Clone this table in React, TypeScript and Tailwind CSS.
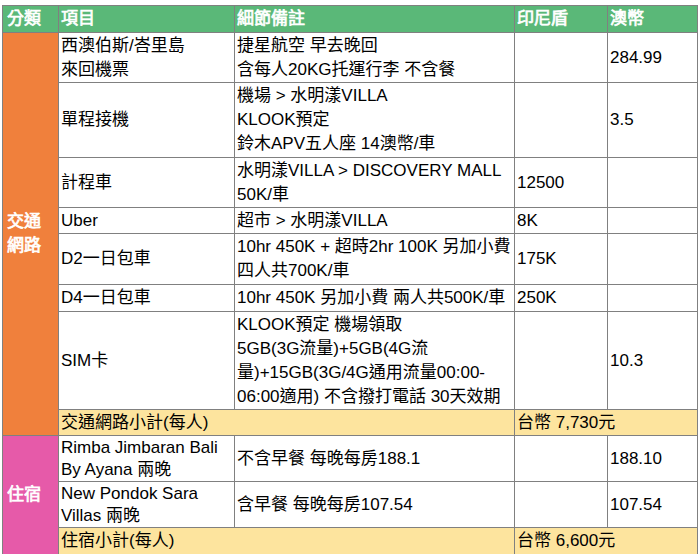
import React from 'react';

type Row = {
    item: React.ReactNode;
    note: string[];
    idr?: string;
    aud?: string;
    h: string;
    tight?: boolean;
};

const transport: Row[] = [
    { item: <>西澳伯斯/峇里島<br />來回機票</>, note: ['捷星航空 早去晚回', '含每人20KG托運行李 不含餐'], aud: '284.99', h: 'h-[50px]' },
    { item: '單程接機', note: ['機場 > 水明漾VILLA', 'KLOOK預定', '鈴木APV五人座 14澳幣/車'], aud: '3.5', h: 'h-[75px]' },
    { item: '計程車', note: ['水明漾VILLA > DISCOVERY MALL', '50K/車'], idr: '12500', h: 'h-[50px]' },
    { item: 'Uber', note: ['超市 > 水明漾VILLA'], idr: '8K', h: 'h-[26px]' },
    { item: 'D2一日包車', note: ['10hr 450K + 超時2hr 100K 另加小費', '四人共700K/車'], idr: '175K', h: 'h-[51px]' },
    { item: 'D4一日包車', note: ['10hr 450K 另加小費 兩人共500K/車'], idr: '250K', h: 'h-[27px]' },
    {
        item: 'SIM卡',
        note: ['KLOOK預定 機場領取', '5GB(3G流量)+5GB(4G流', '量)+15GB(3G/4G通用流量00:00-', '06:00適用) 不含撥打電話 30天效期'],
        aud: '10.3',
        h: 'h-[98px]'
    }
];

const stay: Row[] = [
    { item: <>Rimba Jimbaran Bali<br />By Ayana 兩晚</>, note: ['不含早餐 每晚每房188.1'], aud: '188.10', h: 'h-[46px]', tight: true },
    { item: <>New Pondok Sara<br />Villas 兩晚</>, note: ['含早餐 每晚每房107.54'], aud: '107.54', h: 'h-[46px]', tight: true }
];

const cell = 'border border-[#808080] px-[2px] py-0 align-middle text-left font-normal';
// CJK bold face isn't picked up, so thicken the strokes a little
const bold = 'font-bold text-white [-webkit-text-stroke:0.7px_white]';

const Group = ({ label, color, rows, subtotalLabel, subtotal, subH }: {
    label: React.ReactNode;
    color: string;
    rows: Row[];
    subtotalLabel: string;
    subtotal: string;
    subH: string;
}) => (
    <>
        {rows.map((r, i) => (
            <tr key={i} className={r.h}>
                {i === 0 && (
                    <td rowSpan={rows.length + 1} className={`${cell} ${color} ${bold} pl-[4px]`}>
                        {label}
                    </td>
                )}
                <td className={`${cell} ${r.tight ? 'leading-[22px]' : ''}`}>{r.item}</td>
                <td className={`${cell} ${r.tight ? 'leading-[22px]' : ''}`}>
                    {r.note.map((n, j) => (
                        <div key={j} className="whitespace-nowrap">{n}</div>
                    ))}
                </td>
                <td className={cell}>{r.idr}</td>
                <td className={cell}>{r.aud}</td>
            </tr>
        ))}
        <tr className={`${subH} bg-[#fde49e]`}>
            <td colSpan={2} className={cell}>{subtotalLabel}</td>
            <td colSpan={2} className={cell}>{subtotal}</td>
        </tr>
    </>
);

export default function App() {
    return (
        <div className="bg-white min-h-screen pt-[5px] pl-[2px] text-black text-[17px] leading-6 font-['Liberation_Sans','Noto_Sans_CJK_TC',sans-serif]">
            <table className="table-fixed border-collapse w-[695px]">
                <colgroup>
                    <col className="w-[56px]" />
                    <col className="w-[176px]" />
                    <col className="w-[280px]" />
                    <col className="w-[93px]" />
                    <col className="w-[90px]" />
                </colgroup>
                <thead>
                    <tr className="h-[27px] bg-[#5ab878]">
                        <th className={`${cell} ${bold} pl-[4px]`}>分類</th>
                        <th className={`${cell} ${bold}`}>項目</th>
                        <th className={`${cell} ${bold}`}>細節備註</th>
                        <th className={`${cell} ${bold}`}>印尼盾</th>
                        <th className={`${cell} ${bold}`}>澳幣</th>
                    </tr>
                </thead>
                <tbody>
                    <Group
                        label={<>交通<br />網路</>}
                        color="bg-[#f0803c]"
                        rows={transport}
                        subtotalLabel="交通網路小計(每人)"
                        subtotal="台幣 7,730元"
                        subH="h-[26px]"
                    />
                    <Group
                        label="住宿"
                        color="bg-[#e65aa9]"
                        rows={stay}
                        subtotalLabel="住宿小計(每人)"
                        subtotal="台幣 6,600元"
                        subH="h-[27px]"
                    />
                </tbody>
            </table>
        </div>
    );
}
